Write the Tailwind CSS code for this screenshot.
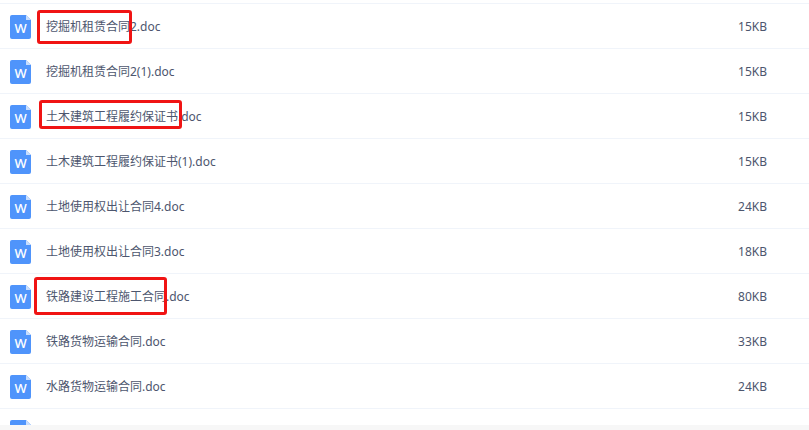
<!DOCTYPE html>
<html lang="en">
<head>
    <meta charset="UTF-8">
    <title>File List</title>
    <script src="https://cdn.jsdelivr.net/npm/@tailwindcss/browser@4"></script>
</head>
<body class="bg-[#f7f7f7] font-['Noto_Sans','Noto_Sans_CJK_SC',sans-serif]">
    <div class="relative w-[809px] h-[430px] overflow-hidden">
        <div class="bg-white h-[425px] overflow-hidden pt-[4px] text-[12px] text-[#4d566e]">
            <div class="h-[1px] -mt-[1px] bg-[#f0f4fa]"></div>

            <div class="flex items-center h-[45px] pt-[1px] pl-[10px] border-b border-[#f0f4fa]">
                <svg class="w-[21px] h-[24px] shrink-0" viewBox="0 0 21 24"><path d="M2 0H16L21 5V22a2 2 0 0 1-2 2H2a2 2 0 0 1-2-2V2a2 2 0 0 1 2-2Z" fill="#4f94fb"/><path d="M16 0L21 5H16Z" fill="#c9defd"/><text x="10.5" y="17.5" text-anchor="middle" font-size="13" font-weight="500" fill="#fff">W</text></svg>
                <span class="ml-[15px]">挖掘机租赁合同2.doc</span>
                <span class="ml-auto mr-[42px]">15KB</span>
            </div>
            <div class="flex items-center h-[45px] pt-[1px] pl-[10px] border-b border-[#f0f4fa]">
                <svg class="w-[21px] h-[24px] shrink-0" viewBox="0 0 21 24"><path d="M2 0H16L21 5V22a2 2 0 0 1-2 2H2a2 2 0 0 1-2-2V2a2 2 0 0 1 2-2Z" fill="#4f94fb"/><path d="M16 0L21 5H16Z" fill="#c9defd"/><text x="10.5" y="17.5" text-anchor="middle" font-size="13" font-weight="500" fill="#fff">W</text></svg>
                <span class="ml-[15px]">挖掘机租赁合同2(1).doc</span>
                <span class="ml-auto mr-[42px]">15KB</span>
            </div>
            <div class="flex items-center h-[45px] pt-[1px] pl-[10px] border-b border-[#f0f4fa]">
                <svg class="w-[21px] h-[24px] shrink-0" viewBox="0 0 21 24"><path d="M2 0H16L21 5V22a2 2 0 0 1-2 2H2a2 2 0 0 1-2-2V2a2 2 0 0 1 2-2Z" fill="#4f94fb"/><path d="M16 0L21 5H16Z" fill="#c9defd"/><text x="10.5" y="17.5" text-anchor="middle" font-size="13" font-weight="500" fill="#fff">W</text></svg>
                <span class="ml-[15px]">土木建筑工程履约保证书.doc</span>
                <span class="ml-auto mr-[42px]">15KB</span>
            </div>
            <div class="flex items-center h-[45px] pt-[1px] pl-[10px] border-b border-[#f0f4fa]">
                <svg class="w-[21px] h-[24px] shrink-0" viewBox="0 0 21 24"><path d="M2 0H16L21 5V22a2 2 0 0 1-2 2H2a2 2 0 0 1-2-2V2a2 2 0 0 1 2-2Z" fill="#4f94fb"/><path d="M16 0L21 5H16Z" fill="#c9defd"/><text x="10.5" y="17.5" text-anchor="middle" font-size="13" font-weight="500" fill="#fff">W</text></svg>
                <span class="ml-[15px]">土木建筑工程履约保证书(1).doc</span>
                <span class="ml-auto mr-[42px]">15KB</span>
            </div>
            <div class="flex items-center h-[45px] pt-[1px] pl-[10px] border-b border-[#f0f4fa]">
                <svg class="w-[21px] h-[24px] shrink-0" viewBox="0 0 21 24"><path d="M2 0H16L21 5V22a2 2 0 0 1-2 2H2a2 2 0 0 1-2-2V2a2 2 0 0 1 2-2Z" fill="#4f94fb"/><path d="M16 0L21 5H16Z" fill="#c9defd"/><text x="10.5" y="17.5" text-anchor="middle" font-size="13" font-weight="500" fill="#fff">W</text></svg>
                <span class="ml-[15px]">土地使用权出让合同4.doc</span>
                <span class="ml-auto mr-[42px]">24KB</span>
            </div>
            <div class="flex items-center h-[45px] pt-[1px] pl-[10px] border-b border-[#f0f4fa]">
                <svg class="w-[21px] h-[24px] shrink-0" viewBox="0 0 21 24"><path d="M2 0H16L21 5V22a2 2 0 0 1-2 2H2a2 2 0 0 1-2-2V2a2 2 0 0 1 2-2Z" fill="#4f94fb"/><path d="M16 0L21 5H16Z" fill="#c9defd"/><text x="10.5" y="17.5" text-anchor="middle" font-size="13" font-weight="500" fill="#fff">W</text></svg>
                <span class="ml-[15px]">土地使用权出让合同3.doc</span>
                <span class="ml-auto mr-[42px]">18KB</span>
            </div>
            <div class="flex items-center h-[45px] pt-[1px] pl-[10px] border-b border-[#f0f4fa]">
                <svg class="w-[21px] h-[24px] shrink-0" viewBox="0 0 21 24"><path d="M2 0H16L21 5V22a2 2 0 0 1-2 2H2a2 2 0 0 1-2-2V2a2 2 0 0 1 2-2Z" fill="#4f94fb"/><path d="M16 0L21 5H16Z" fill="#c9defd"/><text x="10.5" y="17.5" text-anchor="middle" font-size="13" font-weight="500" fill="#fff">W</text></svg>
                <span class="ml-[15px]">铁路建设工程施工合同.doc</span>
                <span class="ml-auto mr-[42px]">80KB</span>
            </div>
            <div class="flex items-center h-[45px] pt-[1px] pl-[10px] border-b border-[#f0f4fa]">
                <svg class="w-[21px] h-[24px] shrink-0" viewBox="0 0 21 24"><path d="M2 0H16L21 5V22a2 2 0 0 1-2 2H2a2 2 0 0 1-2-2V2a2 2 0 0 1 2-2Z" fill="#4f94fb"/><path d="M16 0L21 5H16Z" fill="#c9defd"/><text x="10.5" y="17.5" text-anchor="middle" font-size="13" font-weight="500" fill="#fff">W</text></svg>
                <span class="ml-[15px]">铁路货物运输合同.doc</span>
                <span class="ml-auto mr-[42px]">33KB</span>
            </div>
            <div class="flex items-center h-[45px] pt-[1px] pl-[10px] border-b border-[#f0f4fa]">
                <svg class="w-[21px] h-[24px] shrink-0" viewBox="0 0 21 24"><path d="M2 0H16L21 5V22a2 2 0 0 1-2 2H2a2 2 0 0 1-2-2V2a2 2 0 0 1 2-2Z" fill="#4f94fb"/><path d="M16 0L21 5H16Z" fill="#c9defd"/><text x="10.5" y="17.5" text-anchor="middle" font-size="13" font-weight="500" fill="#fff">W</text></svg>
                <span class="ml-[15px]">水路货物运输合同.doc</span>
                <span class="ml-auto mr-[42px]">24KB</span>
            </div>
            <div class="flex h-[45px] pl-[10px] pt-[11px]">
                <svg class="w-[21px] h-[24px] shrink-0" viewBox="0 0 21 24"><path d="M2 0H16L21 5V22a2 2 0 0 1-2 2H2a2 2 0 0 1-2-2V2a2 2 0 0 1 2-2Z" fill="#4f94fb"/><path d="M16 0L21 5H16Z" fill="#c9defd"/></svg>
            </div>
        </div>

        <!-- red annotation boxes -->
        <div class="absolute left-[37px] top-[10px] w-[95px] h-[34px] border-[3px] border-[#f01414] rounded-[3px]"></div>
        <div class="absolute left-[39px] top-[100px] w-[143px] h-[29px] border-[3px] border-[#f01414] rounded-[3px]"></div>
        <div class="absolute left-[34px] top-[277px] w-[133px] h-[38px] border-[3px] border-[#f01414] rounded-[3px]"></div>
    </div>
</body>
</html>
